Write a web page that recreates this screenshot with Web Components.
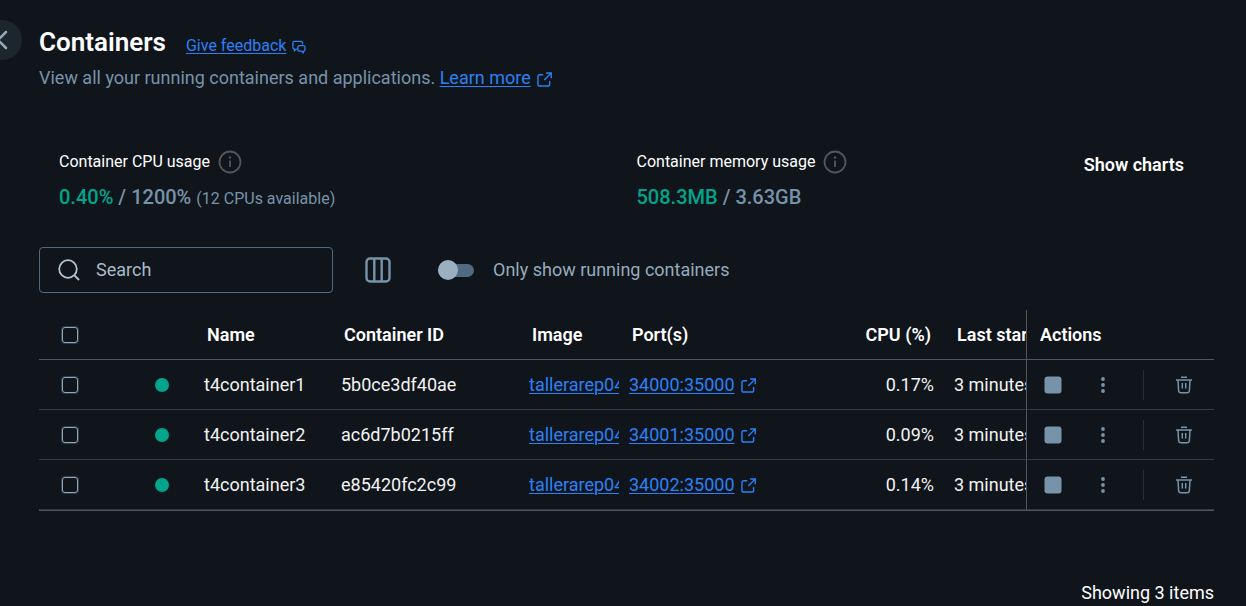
<!DOCTYPE html>
<html lang="en">
<head>
<meta charset="utf-8">
<meta name="viewport" content="width=device-width, initial-scale=1">
<title>Containers</title>
<style>
  :root {
    --bg: #10151b;
    --text: #ffffff;
    --text-soft: #f2f2f2;
    --muted: #7693aa;
    --muted-light: #94abbc;
    --link: #2a81f6;
    --green: #00a58b;
    --line: #555555;
    --row-line: #2d3c48;
    --field-line: #4e6b82;
  }
  body {
    margin: 0;
    background: var(--bg);
    color: var(--text);
    font: 18px/24px Roboto, "Liberation Sans", sans-serif;
  }
</style>
</head>
<body>
<containers-page></containers-page>

<script>
const define = (name, html, setup) => {
  const template = document.createElement('template');
  template.innerHTML = html;
  customElements.define(name, class extends HTMLElement {
    connectedCallback() {
      if (this.shadowRoot) return;
      const root = this.attachShadow({ mode: 'open' });
      root.append(template.content.cloneNode(true));
      if (setup) setup(this, root);
    }
  });
};

const ICONS = {
  back: ['0 0 16 20', '<path d="M12 2 4 10l8 8" stroke-width="2.5" stroke-linecap="round" stroke-linejoin="round"/>'],
  feedback: ['0 0 16 16', '<path d="M6 10.500H4.500L2.800 12.500V10.200Q1 10 1 8.200V3.500Q1 1.500 3 1.500H10Q12 1.500 12 3.500V5" stroke-width="1.500" stroke-linejoin="round"/><path d="M8.500 6.500H13Q14.800 6.500 14.800 8.300V11Q14.800 12.800 13 12.800V14.800L10.800 12.800H8.500Q6.700 12.800 6.700 11V8.300Q6.700 6.500 8.500 6.500Z" stroke-width="1.500" stroke-linejoin="round"/>'],
  external: ['0 0 16 16', '<path d="M6 3H3Q1 3 1 5V13Q1 15 3 15H11.500Q13.500 15 13.500 13V10" stroke-width="1.500" stroke-linecap="round"/><path d="M10.500 1H15.200V5.800M15 1.200 8.300 7.900" stroke-width="1.500" stroke-linecap="square"/>'],
  info: ['0 0 24 24', '<circle cx="12" cy="12" r="10.500" stroke-width="1.800"/><path d="M12 10.500V17" stroke-width="1.800"/><circle cx="12" cy="7.500" r="1.200" fill="currentColor" stroke="none"/>'],
  search: ['0 0 22 22', '<circle cx="10" cy="10" r="8.800" stroke-width="1.800"/><path d="m16.200 16.200 4.800 4.800" stroke-width="1.900"/>'],
  columns: ['0 0 26 26', '<rect x="1.500" y="1.500" width="23" height="23" rx="3.500" stroke-width="2.400"/><path d="M9.300 2V24M16.700 2V24" stroke-width="2.400"/>'],
  stop: ['0 0 18 18', '<rect x="0.500" y="0.500" width="17" height="17" rx="3" fill="currentColor" stroke="none"/>'],
  more: ['0 0 18 18', '<g fill="currentColor" stroke="none"><circle cx="9" cy="3" r="1.900"/><circle cx="9" cy="9" r="1.900"/><circle cx="9" cy="15" r="1.900"/></g>'],
  trash: ['0 0 18 18', '<path d="M1 4H17M6 1.300H12M3 4.200 3.600 14.500Q3.800 16.700 6 16.700H12Q14.200 16.700 14.400 14.500L15 4.200M7.300 7V12.500M10.700 7V12.500" stroke-width="1.500"/>']
};

define('ui-icon', `
  <style>
    :host { display: inline-flex; flex: none; width: 16px; height: 16px; }
    svg { width: 100%; height: 100%; fill: none; stroke: currentColor; overflow: visible; }
  </style>
  <svg aria-hidden="true"></svg>
`, (host, root) => {
  const [box, shapes] = ICONS[host.getAttribute('name')];
  const svg = root.querySelector('svg');
  svg.setAttribute('viewBox', box);
  svg.innerHTML = shapes;
});

define('icon-link', `
  <style>
    :host { display: inline-flex; align-items: center; gap: 6px; color: var(--link); }
    a { color: inherit; text-decoration: underline; text-underline-offset: 2px; text-decoration-thickness: 1px; }
    ui-icon { width: 15px; height: 15px; margin-top: 2px; }
    ui-icon[name="feedback"] { width: 14px; height: 14px; }
  </style>
  <a href="#"><slot></slot></a>
`, (host, root) => {
  const icon = document.createElement('ui-icon');
  icon.setAttribute('name', host.getAttribute('icon') || 'external');
  root.append(icon);
});

define('page-heading', `
  <style>
    :host { display: block; }
    .title { display: flex; align-items: baseline; gap: 20px; }
    h1 { margin: 0; font-size: 26px; line-height: 36px; font-weight: 600; }
    .feedback { font-size: 16px; }
    p { margin: 6px 0 0; color: var(--muted); }
  </style>
  <div class="title">
    <h1>Containers</h1>
    <icon-link class="feedback" icon="feedback">Give feedback</icon-link>
  </div>
  <p>View all your running containers and applications. <icon-link>Learn more</icon-link></p>
`);

define('usage-stat', `
  <style>
    :host { display: block; }
    .label { display: flex; align-items: center; gap: 8px; font-size: 16px; }
    .label ui-icon { width: 24px; height: 24px; color: #555555; }
    .value { margin-top: 11px; font-size: 20px; font-weight: 500; color: var(--muted); }
    ::slotted([slot="used"]) { color: var(--green); }
    ::slotted([slot="note"]) { font-size: 16px; font-weight: 400; }
  </style>
  <div class="label"><slot></slot><ui-icon name="info"></ui-icon></div>
  <div class="value"><slot name="used"></slot> / <slot name="total"></slot> <slot name="note"></slot></div>
`);

define('search-box', `
  <style>
    :host { display: block; width: 294px; }
    label {
      display: flex; align-items: center; gap: 16px; box-sizing: border-box; height: 46px;
      padding: 0 18px; border: 1px solid var(--field-line); border-radius: 4px;
    }
    ui-icon { width: 22px; height: 22px; color: #b4c4d0; }
    input {
      flex: 1; min-width: 0; padding: 0; border: 0; outline: 0; background: none;
      color: var(--text); font: inherit;
    }
    input::placeholder { color: #a9bac7; opacity: 1; }
  </style>
  <label><ui-icon name="search"></ui-icon><input type="text" placeholder="Search" aria-label="Search"></label>
`);

define('toggle-switch', `
  <style>
    :host { display: block; }
    label { display: flex; align-items: center; gap: 19px; color: var(--muted-light); }
    input {
      appearance: none; display: flex; align-items: center; width: 36px; height: 13px; margin: 0;
      border-radius: 7px; background: #4e6b82;
    }
    input::before { content: ""; width: 20px; height: 20px; flex: none; border-radius: 50%; background: #9ab0c0; }
    input:checked { justify-content: flex-end; }
  </style>
  <label><input type="checkbox" role="switch"><span><slot></slot></span></label>
`);

define('icon-button', `
  <style>
    :host { display: inline-flex; width: 50px; height: 30px; color: var(--muted); }
    button {
      display: flex; align-items: center; justify-content: center; width: 100%; padding: 0;
      border: 0; background: none; color: inherit; cursor: pointer;
    }
    ::slotted(ui-icon) { width: var(--icon-size, 18px); height: var(--icon-size, 18px); }
  </style>
  <button type="button"><slot></slot></button>
`, (host, root) => root.querySelector('button').setAttribute('aria-label', host.getAttribute('label')));

define('row-actions', `
  <style>
    :host { display: flex; align-items: center; color: var(--muted); }
    .rule { width: 1px; height: 30px; margin: 0 15px; background: #2b2f34; }
  </style>
  <icon-button label="Stop"><ui-icon name="stop"></ui-icon></icon-button>
  <icon-button label="More actions"><ui-icon name="more"></ui-icon></icon-button>
  <span class="rule"></span>
  <icon-button label="Delete"><ui-icon name="trash"></ui-icon></icon-button>
`);

const CONTAINERS = [
  { name: 't4container1', id: '5b0ce3df40ae', image: 'tallerarep04', port: '34000:35000', cpu: '0.17%', started: '3 minutes ago' },
  { name: 't4container2', id: 'ac6d7b0215ff', image: 'tallerarep04', port: '34001:35000', cpu: '0.09%', started: '3 minutes ago' },
  { name: 't4container3', id: 'e85420fc2c99', image: 'tallerarep04', port: '34002:35000', cpu: '0.14%', started: '3 minutes ago' }
];

define('container-table', `
  <style>
    :host { display: block; }
    table { width: 100%; table-layout: fixed; border-collapse: separate; border-spacing: 0; border-bottom: 1px solid var(--line); }
    .c-check { width: 62px; } .c-state { width: 98px; } .c-name { width: 137px; } .c-id { width: 188px; }
    .c-image { width: 100px; } .c-cpu { width: 100px; } .c-gap { width: 10px; } .c-start { width: 77px; } .c-act { width: 188px; }
    th, td { box-sizing: border-box; height: 50px; text-align: left; white-space: nowrap; overflow: hidden; }
    th { padding: 0 8px; font-weight: 600; border-bottom: 1px solid var(--line); }
    td { padding: 0 5px; color: var(--text-soft); border-bottom: 1px solid var(--row-line); }
    .num { text-align: right; }
    .check { padding: 0 0 0 23px; }
    .pin { border-left: 1px solid var(--line); }
    th.pin { padding: 0 13px; }
    td.pin { padding: 0 1px; }
    .state { padding: 0 0 0 54px; }
    .dot { display: block; width: 14px; height: 14px; border-radius: 50%; background: var(--green); }
    .clip { display: block; overflow: hidden; color: var(--link); text-decoration: underline; text-underline-offset: 2px; text-decoration-thickness: 1px; }
    input {
      appearance: none; display: block; box-sizing: border-box; width: 16px; height: 16px; margin: 0;
      border: 1px solid #8fa8ba; border-radius: 3px; box-shadow: 0 0 0 1px #7693aa55;
    }
    input:checked { background: var(--muted); }
  </style>
  <table>
    <colgroup>
      <col class="c-check"><col class="c-state"><col class="c-name"><col class="c-id"><col class="c-image">
      <col><col class="c-cpu"><col class="c-gap"><col class="c-start"><col class="c-act">
    </colgroup>
    <thead>
      <tr>
        <th class="check"><input type="checkbox" aria-label="Select all containers"></th>
        <th></th><th>Name</th><th>Container ID</th><th>Image</th><th>Port(s)</th>
        <th class="num">CPU (%)</th><th></th><th>Last started</th><th class="pin">Actions</th>
      </tr>
    </thead>
    <tbody>${CONTAINERS.map(c => `
      <tr>
        <td class="check"><input type="checkbox" aria-label="Select ${c.name}"></td>
        <td class="state"><span class="dot"></span></td>
        <td>${c.name}</td><td>${c.id}</td>
        <td><a class="clip" href="#">${c.image}</a></td>
        <td><icon-link>${c.port}</icon-link></td>
        <td class="num">${c.cpu}</td><td></td><td>${c.started}</td>
        <td class="pin"><row-actions></row-actions></td>
      </tr>`).join('')}
    </tbody>
  </table>
`);

define('containers-page', `
  <style>
    :host { display: block; padding: 24px 32px 0 39px; }
    .back {
      position: absolute; left: -18px; top: 20px; width: 40px; height: 40px; padding: 0;
      display: flex; align-items: center; justify-content: center;
      border: 0; border-radius: 50%; background: #1d262d; color: var(--muted-light);
    }
    .back ui-icon { width: 16px; height: 20px; }
    .stats { display: grid; grid-template-columns: 1fr 1fr; column-gap: 20px; padding: 0 20px; margin-top: 60px; }
    .with-button { display: flex; justify-content: space-between; align-items: flex-start; }
    .charts { padding: 3px 10px; border: 0; background: none; color: var(--text); font: inherit; font-weight: 600; }
    .toolbar { display: flex; align-items: center; margin-top: 36px; }
    .columns { --icon-size: 26px; margin: 0 35px 0 20px; }
    container-table { margin-top: 17px; }
    footer { margin-top: 70px; text-align: right; }
  </style>
  <button class="back" type="button" aria-label="Back"><ui-icon name="back"></ui-icon></button>
  <main>
    <page-heading></page-heading>
    <section class="stats">
      <usage-stat>Container CPU usage<span slot="used">0.40%</span><span slot="total">1200%</span><span slot="note">(12 CPUs available)</span></usage-stat>
      <div class="with-button">
        <usage-stat>Container memory usage<span slot="used">508.3MB</span><span slot="total">3.63GB</span></usage-stat>
        <button class="charts" type="button">Show charts</button>
      </div>
    </section>
    <section class="toolbar">
      <search-box></search-box>
      <icon-button class="columns" label="Choose columns"><ui-icon name="columns"></ui-icon></icon-button>
      <toggle-switch>Only show running containers</toggle-switch>
    </section>
    <container-table></container-table>
  </main>
  <footer>Showing 3 items</footer>
`);
</script>
</body>
</html>
